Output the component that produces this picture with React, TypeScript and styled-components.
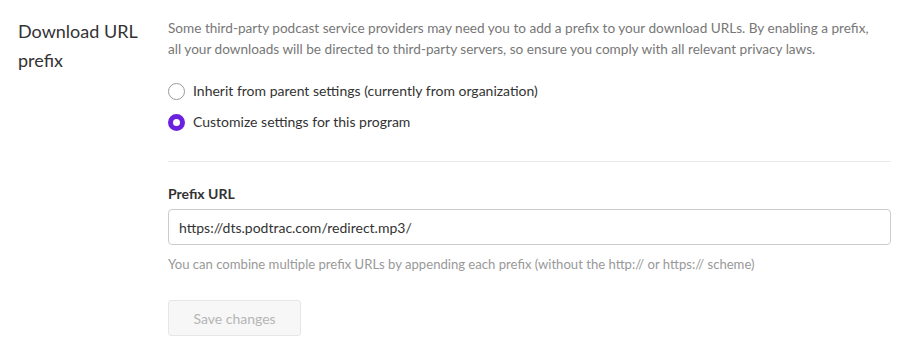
import React, { FunctionComponent, useState } from 'react';
import styled, { createGlobalStyle } from 'styled-components';

const GlobalStyle = createGlobalStyle`
  body {
    margin: 0;
    background: #fff;
    font-family: Lato, "Open Sans", sans-serif;
    color: #333;
  }
`;

const Section = styled.div`
  display: grid;
  grid-template-columns: 150px 723px;
  padding: 17px 0 0 18px;
`;

const Title = styled.div`
  font-size: 18px;
  line-height: 29px;
  color: #333;
  width: 130px;
`;

const Body = styled.div`
  display: flex;
  flex-direction: column;
`;

const Description = styled.p`
  margin: 1px 0 0;
  padding-right: 18px;
  font-size: 13.6px;
  line-height: 21px;
  color: #777;
`;

const RadioGroup = styled.div`
  display: flex;
  flex-direction: column;
  gap: 13px;
  margin-top: 22px;
  padding-bottom: 30px;
  border-bottom: 1px solid #eaeaea;
`;

const RadioRow = styled.label`
  display: flex;
  align-items: center;
  gap: 8px;
  font-size: 14px;
  line-height: 18px;
  color: #333;
  cursor: pointer;
`;

const RadioDot = styled.span<{ $checked: boolean }>`
  box-sizing: border-box;
  width: 17px;
  height: 17px;
  border-radius: 50%;
  border: ${p => (p.$checked ? '5px solid #6b22e0' : '1px solid #999')};
  background: #fff;
  flex: none;
`;

const FieldLabel = styled.div`
  margin-top: 23px;
  font-size: 14px;
  font-weight: bold;
  line-height: 18px;
  color: #333;
`;

const TextInput = styled.input`
  box-sizing: border-box;
  margin-top: 6px;
  width: 100%;
  height: 36px;
  padding: 0 10px;
  border: 1px solid #ccc;
  border-radius: 4px;
  font-family: Lato, "Open Sans", sans-serif;
  font-size: 14px;
  color: #333;
  outline: none;
`;

const Hint = styled.div`
  margin-top: 11px;
  font-size: 13.1px;
  line-height: 16px;
  color: #999;
`;

const SaveButton = styled.button`
  box-sizing: border-box;
  margin-top: 28px;
  width: 133px;
  height: 36px;
  border: 1px solid #e6e6e6;
  border-radius: 3px;
  background: #f7f7f7;
  color: #b5b5b5;
  font-family: Lato, "Open Sans", sans-serif;
  font-size: 14px;
  cursor: default;
`;

const options = [
  { id: 'inherit', label: 'Inherit from parent settings (currently from organization)' },
  { id: 'custom', label: 'Customize settings for this program' },
];

const App: FunctionComponent = () => {
  const [choice, setChoice] = useState('custom');
  const [url, setUrl] = useState('https://dts.podtrac.com/redirect.mp3/');

  return (
    <>
      <GlobalStyle />
      <Section>
        <Title>Download URL prefix</Title>
        <Body>
          <Description>
            Some third-party podcast service providers may need you to add a prefix to your download URLs. By
            enabling a prefix, all your downloads will be directed to third-party servers, so ensure you comply with
            all relevant privacy laws.
          </Description>
          <RadioGroup>
            {options.map(o => (
              <RadioRow key={o.id} onClick={() => setChoice(o.id)}>
                <RadioDot $checked={choice === o.id} />
                {o.label}
              </RadioRow>
            ))}
          </RadioGroup>
          <FieldLabel>Prefix URL</FieldLabel>
          <TextInput value={url} onChange={e => setUrl(e.target.value)} />
          <Hint>You can combine multiple prefix URLs by appending each prefix (without the http:// or https:// scheme)</Hint>
          <div>
            <SaveButton disabled>Save changes</SaveButton>
          </div>
        </Body>
      </Section>
    </>
  );
};

export default App;
